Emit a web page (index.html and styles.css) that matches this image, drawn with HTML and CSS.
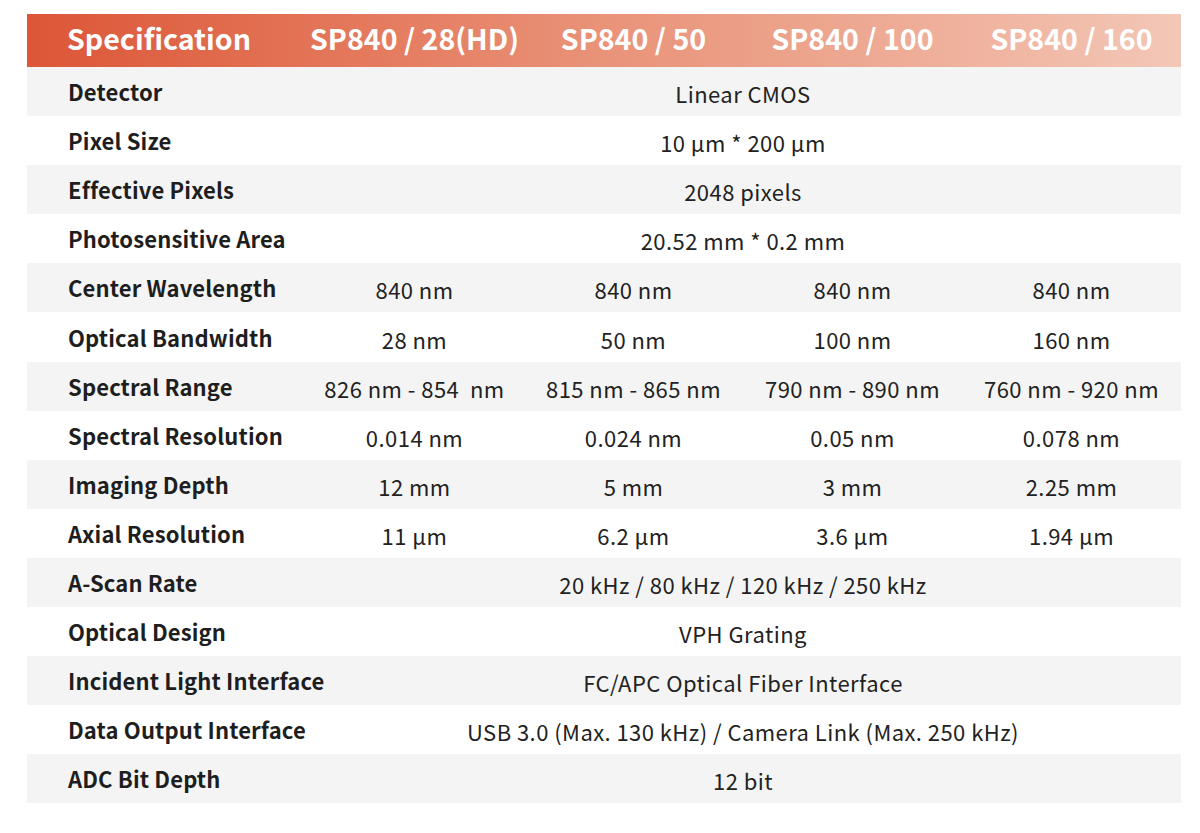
FILE: index.html
```html
<!DOCTYPE html>
<html lang="en">
<head>
<meta charset="utf-8">
<title>SP840 Specification</title>
<link rel="stylesheet" href="styles.css">
</head>
<body>
<div class="page">
<table class="spec">
  <colgroup>
    <col class="c-label">
    <col class="c-val">
    <col class="c-val">
    <col class="c-val">
    <col class="c-val">
  </colgroup>
  <thead>
    <tr>
      <th class="h-label">Specification</th>
      <th>SP840 / 28(HD)</th>
      <th>SP840 / 50</th>
      <th>SP840 / 100</th>
      <th>SP840 / 160</th>
    </tr>
  </thead>
  <tbody>
    <tr class="g"><td class="label">Detector</td><td colspan="4">Linear CMOS</td></tr>
    <tr><td class="label">Pixel Size</td><td colspan="4">10 µm * 200 µm</td></tr>
    <tr class="g"><td class="label">Effective Pixels</td><td colspan="4">2048 pixels</td></tr>
    <tr><td class="label">Photosensitive Area</td><td colspan="4">20.52 mm * 0.2 mm</td></tr>
    <tr class="g"><td class="label">Center Wavelength</td><td>840 nm</td><td>840 nm</td><td>840 nm</td><td>840 nm</td></tr>
    <tr><td class="label">Optical Bandwidth</td><td>28 nm</td><td>50 nm</td><td>100 nm</td><td>160 nm</td></tr>
    <tr class="g"><td class="label">Spectral Range</td><td>826 nm - 854&nbsp; nm</td><td>815 nm - 865 nm</td><td>790 nm - 890 nm</td><td>760 nm - 920 nm</td></tr>
    <tr><td class="label">Spectral Resolution</td><td>0.014 nm</td><td>0.024 nm</td><td>0.05 nm</td><td>0.078 nm</td></tr>
    <tr class="g"><td class="label">Imaging Depth</td><td>12 mm</td><td>5 mm</td><td>3 mm</td><td>2.25 mm</td></tr>
    <tr><td class="label">Axial Resolution</td><td>11 µm</td><td>6.2 µm</td><td>3.6 µm</td><td>1.94 µm</td></tr>
    <tr class="g"><td class="label">A-Scan Rate</td><td colspan="4">20 kHz / 80 kHz / 120 kHz / 250 kHz</td></tr>
    <tr><td class="label">Optical Design</td><td colspan="4">VPH Grating</td></tr>
    <tr class="g"><td class="label">Incident Light Interface</td><td colspan="4">FC/APC Optical Fiber Interface</td></tr>
    <tr><td class="label">Data Output Interface</td><td colspan="4">USB 3.0 (Max. 130 kHz) / Camera Link (Max. 250 kHz)</td></tr>
    <tr class="g"><td class="label">ADC Bit Depth</td><td colspan="4">12 bit</td></tr>
  </tbody>
</table>
</div>
</body>
</html>
```

FILE: styles.css
```css
html, body {
  margin: 0;
  padding: 0;
  background: #ffffff;
}
body {
  font-family: "Noto Sans CJK SC", "Noto Sans", sans-serif;
  color: #222222;
}
.page {
  padding: 14px 19px 0 27px;
}
.spec {
  border-collapse: collapse;
  table-layout: fixed;
  width: 1154px;
}
.c-label { width: 278px; }
.c-val { width: 219px; }

.spec thead tr {
  background: linear-gradient(90deg, #dc5637 0%, #e37457 25%, #e99379 50%, #eeab95 75%, #f3c7b7 100%);
}
.spec th {
  height: 53px;
  padding: 0 0 5px 0;
  box-sizing: border-box;
  font-size: 28.6px;
  letter-spacing: 0;
  font-weight: 700;
  color: #ffffff;
  text-align: center;
  white-space: nowrap;
  line-height: 1;
}
.spec th.h-label {
  text-align: left;
  padding-left: 40px;
}
.spec td {
  height: 49.1px;
  padding: 3px 0 0 0;
  box-sizing: border-box;
  font-size: 22px;
  letter-spacing: 0.45px;
  text-align: center;
  white-space: nowrap;
  line-height: 1;
  color: #222222;
}
.spec td.label {
  text-align: left;
  padding: 0 0 1px 41px;
  font-weight: 700;
  font-size: 22px;
  letter-spacing: 0.15px;
  color: #1e1e1e;
}
.spec tr.g {
  background: #f4f4f4;
}
```
